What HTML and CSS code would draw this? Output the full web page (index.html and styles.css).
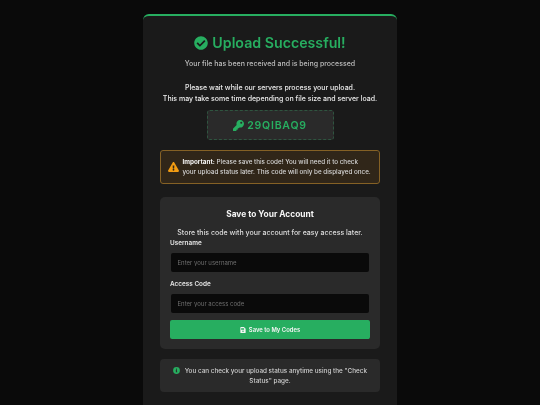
FILE: index.html
```html
<!DOCTYPE html>
<html lang="en">
<head>
<meta charset="utf-8">
<title>Upload Successful</title>
<link rel="stylesheet" href="styles.css">
</head>
<body>
<main class="card">
  <h1 class="title">
    <svg class="title-icon" viewBox="0 0 512 512"><path fill="currentColor" d="M504 256c0 137-111 248-248 248S8 393 8 256 119 8 256 8s248 111 248 248zM227 387l184-184c6-6 6-16 0-22l-23-23c-6-6-16-6-22 0L216 308l-70-70c-6-6-16-6-22 0l-23 23c-6 6-6 16 0 22l104 104c6 6 16 6 22 0z"/></svg>
    Upload Successful!
  </h1>
  <p class="subtitle">Your file has been received and is being processed</p>
  <p class="wait">Please wait while our servers process your upload.<br>This may take some time depending on file size and server load.</p>
  <div class="code">
    <svg class="key-icon" viewBox="0 0 512 512"><path fill="currentColor" d="M512 176a176 176 0 0 1-209 173l-24 27a24 24 0 0 1-18 8h-37v40a24 24 0 0 1-24 24h-40v40a24 24 0 0 1-24 24H24a24 24 0 0 1-24-24v-78c0-6 3-12 7-17l162-162A176 176 0 1 1 512 176zM336 128a48 48 0 1 0 96 0 48 48 0 0 0-96 0z"/></svg>
    <span>29QIBAQ9</span>
  </div>
  <div class="warning">
    <svg class="warn-icon" viewBox="0 0 576 512"><path fill="currentColor" d="M570 440c18 32-5 72-42 72H48c-37 0-60-40-42-72L246 24c18-32 66-32 84 0l240 416zM288 354a46 46 0 1 0 0 92 46 46 0 0 0 0-92zm-44-166 7 136c0 6 6 11 12 11h50c6 0 12-5 12-11l7-136c0-7-5-12-12-12h-64c-7 0-12 5-12 12z"/></svg>
    <p><strong>Important:</strong> Please save this code! You will need it to check your upload status later. This code will only be displayed once.</p>
  </div>
  <section class="account">
    <h2>Save to Your Account</h2>
    <p class="account-text">Store this code with your account for easy access later.</p>
    <form class="form">
      <div class="field">
        <label for="u">Username</label>
        <input id="u" type="text" placeholder="Enter your username">
      </div>
      <div class="field">
        <label for="c">Access Code</label>
        <input id="c" type="text" placeholder="Enter your access code">
      </div>
      <button type="button" class="save">
        <svg class="save-icon" viewBox="0 0 448 512"><path fill="currentColor" d="M433 129 319 15c-9-9-21-15-34-15H48C21 0 0 21 0 48v416c0 27 21 48 48 48h352c27 0 48-21 48-48V163c0-13-5-25-15-34zM224 416a64 64 0 1 1 0-128 64 64 0 0 1 0 128zm96-304v100c0 7-5 12-12 12H76c-7 0-12-5-12-12V108c0-7 5-12 12-12h228c3 0 6 1 8 4l4 4c2 2 4 5 4 8z"/></svg>
        Save to My Codes
      </button>
    </form>
  </section>
  <div class="info">
    <svg class="info-icon" viewBox="0 0 512 512"><path fill="currentColor" d="M256 8a248 248 0 1 0 0 496 248 248 0 0 0 0-496zm0 110a42 42 0 1 1 0 84 42 42 0 0 1 0-84zm56 254c0 7-5 12-12 12h-88c-7 0-12-5-12-12v-24c0-7 5-12 12-12h12v-64h-12c-7 0-12-5-12-12v-24c0-7 5-12 12-12h64c7 0 12 5 12 12v100h12c7 0 12 5 12 12v24z"/></svg>
    You can check your upload status anytime using the "Check Status" page.
  </div>
</main>
</body>
</html>
```
FILE: styles.css
```css
* { box-sizing: border-box; }
html, body { margin: 0; height: 405px; overflow: hidden; }
body {
  background: #0a0a0a;
  font-family: "Inter", "Liberation Sans", sans-serif;
  color: #f0f0f0;
}
.card {
  width: 254px;
  margin: 14px auto 0;
  padding: 19px 17px 24px;
  background: #1a1a1a;
  border-top: 2px solid #27ae60;
  border-radius: 6px;
  text-align: center;
  will-change: transform;
}
.title {
  margin: 0;
  font-size: 14.2px;
  line-height: 16px;
  font-weight: 600;
  color: #27ae60;
  display: flex;
  align-items: center;
  justify-content: center;
  gap: 4px;
}
.title-icon { width: 14px; height: 14px; }
.subtitle {
  margin: 8px 0 0;
  font-size: 7px;
  line-height: 10px;
  font-weight: 500;
  color: #bdbdbd;
}
.wait {
  margin: 13px 0 0;
  font-size: 7px;
  line-height: 11px;
  font-weight: 500;
  color: #ececec;
}
.code {
  width: 127px;
  height: 30px;
  margin: 6px auto 0;
  display: flex;
  align-items: center;
  justify-content: center;
  gap: 3px;
  background: #2a2a2a;
  border: 1px dashed #2f5540;
  border-radius: 3px;
  color: #27ae60;
  font-size: 10.5px;
  font-weight: 600;
  letter-spacing: 0.8px;
}
.key-icon { width: 11px; height: 11px; }
.warning {
  margin-top: 10px;
  height: 34px;
  display: flex;
  align-items: center;
  gap: 3.5px;
  padding: 0 7px;
  background: #302619;
  border: 1px solid #856125;
  border-radius: 3px;
  text-align: left;
  font-size: 6.3px;
  line-height: 10px;
  font-weight: 500;
  color: #d5d5d5;
}
.warning p { margin: 0; }
.warning strong { color: #f5f5f5; font-weight: 700; }
.warn-icon { width: 11px; height: 10px; flex: none; color: #f39c12; }
.account {
  margin-top: 13px;
  padding: 12px 10px 10px;
  height: 152px;
  background: #2a2a2a;
  border-radius: 5px;
}
.account h2 {
  margin: 0;
  font-size: 8.4px;
  line-height: 11px;
  font-weight: 700;
  color: #f5f5f5;
}
.account-text {
  margin: 7px 0 0;
  font-size: 7px;
  line-height: 11px;
  font-weight: 500;
  color: #dedede;
}
.form { display: flex; flex-direction: column; margin-top: 1px; }
.field { margin-bottom: 8px; text-align: left; }
.field:last-of-type { margin-bottom: 7px; }
.field label {
  display: block;
  height: 14px;
  font-size: 6.4px;
  line-height: 9px;
  font-weight: 600;
  color: #e6e6e6;
}
.field input {
  display: block;
  width: 198px;
  height: 19px;
  margin-left: 1px;
  padding: 0 6.5px;
  background: #0a0a0a;
  border: 0;
  border-radius: 2px;
  font-family: inherit;
  font-size: 6px;
}
.field input::placeholder { color: #6e6e6e; opacity: 1; }
.save {
  width: 200px;
  height: 19px;
  display: flex;
  align-items: center;
  justify-content: center;
  gap: 3px;
  background: #27ae60;
  border: 0;
  border-radius: 2px;
  color: #f5f5f5;
  font-family: inherit;
  font-size: 5.9px;
  font-weight: 600;
}
.save-icon { width: 6px; height: 6px; }
.info {
  margin-top: 10px;
  padding: 7px 10px;
  height: 33px;
  background: #2a2a2a;
  border-radius: 4px;
  font-size: 6.35px;
  line-height: 10px;
  font-weight: 500;
  color: #cfcfcf;
}
.info-icon { width: 7px; height: 7px; margin-right: 3px; color: #27ae60; vertical-align: -1px; }
```
